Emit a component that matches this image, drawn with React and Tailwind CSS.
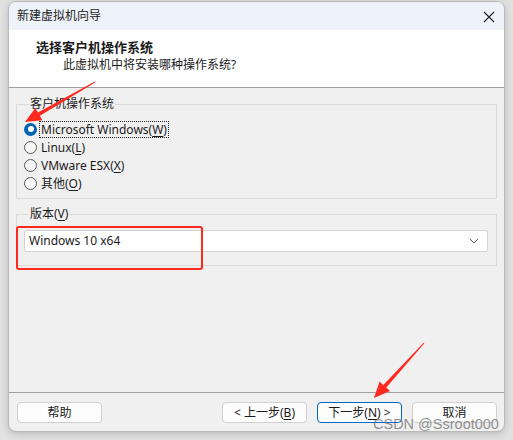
import React from "react";

const U = ({ children }) => <span className="underline underline-offset-2">{children}</span>;

function Radio({ checked, children, focus }) {
  return (
    <div className="flex items-center h-[18px]">
      {checked ? (
        <div className="w-[13px] h-[13px] rounded-full bg-[#0063b1] flex items-center justify-center shrink-0">
          <div className="w-[6px] h-[6px] rounded-full bg-white" />
        </div>
      ) : (
        <div className="w-[13px] h-[13px] rounded-full border border-[#5a5a5a] bg-[#f7f7f7] shrink-0" />
      )}
      <span
        className={
          "ml-[3px] leading-[15px] px-px " +
          (focus ? "outline-1 outline-dotted outline-[#222]" : "")
        }
      >
        {children}
      </span>
    </div>
  );
}

function Btn({ children, primary }) {
  return (
    <div
      className={
        "w-[85px] h-[21px] rounded-[4px] bg-[#fdfdfd] border flex items-center justify-center text-[12px] " +
        (primary ? "border-[#0067c0]" : "border-[#d0d0d0]")
      }
    >
      {children}
    </div>
  );
}

export default function App() {
  return (
    <div
      className="relative w-[513px] h-[440px] bg-[#e2e2e2] pl-2 pt-px text-[12px] text-[#1b1b1b]"
      style={{ fontFamily: '"Segoe UI", "Noto Sans", "Noto Sans CJK SC", sans-serif' }}
    >
      <div className="w-[497px] h-[431px] rounded-[8px] border border-[#b9b9b9] bg-[#f0f0f0] overflow-hidden flex flex-col shadow-[0_2px_8px_rgba(0,0,0,0.18)]">
        {/* title bar */}
        <div className="h-[28px] bg-[#eef2f9] flex items-center justify-between pl-2 pr-[9px] shrink-0">
          <span className="text-[12px]">新建虚拟机向导</span>
          <svg width="12" height="12" viewBox="0 0 12 12" className="mt-px">
            <path d="M1 1 L11 11 M11 1 L1 11" stroke="#222" strokeWidth="1.1" />
          </svg>
        </div>
        {/* header */}
        <div className="h-[58px] bg-white border-b border-[#a0a0a0] shrink-0 pt-[9px]">
          <div className="pl-[27px] font-bold text-[13px] leading-[17px]">选择客户机操作系统</div>
          <div className="pl-[54px] text-[12px] leading-[16px] mt-px">此虚拟机中将安装哪种操作系统?</div>
        </div>
        {/* body */}
        <div className="flex-1 px-[7px] pt-[8px]">
          <fieldset className="border border-[#dadada] pl-[7px] pb-[6px]">
            <legend className="ml-[5px] px-px leading-[16px]">客户机操作系统</legend>
            <div className="pt-[8px] flex flex-col">
              <Radio checked focus>
                Microsoft Windows(<U>W</U>)
              </Radio>
              <Radio>
                Linux(<U>L</U>)
              </Radio>
              <Radio>
                VMware ESX(<U>X</U>)
              </Radio>
              <Radio>
                其他(<U>O</U>)
              </Radio>
            </div>
          </fieldset>
          <fieldset className="mt-[7px] border border-[#dadada] pl-[7px] pr-[8px] pb-[13px]">
            <legend className="ml-[5px] px-px leading-[16px]">
              版本(<U>V</U>)
            </legend>
            <div className="mt-[8px] h-[22px] bg-white border border-[#d4d4d4] rounded-[2px] flex items-center justify-between pl-[4px] pr-[8px]">
              <span>Windows 10 x64</span>
              <svg width="10" height="6" viewBox="0 0 10 6">
                <path d="M1 1 L5 5 L9 1" fill="none" stroke="#555" strokeWidth="1" />
              </svg>
            </div>
          </fieldset>
        </div>
        {/* footer */}
        <div className="h-[39px] border-t border-[#a0a0a0] shrink-0 flex items-start pt-[9px] pl-[8px] pr-[7px]">
          <Btn>帮助</Btn>
          <div className="flex-1" />
          <div className="flex gap-[10px]">
            <Btn>
              &lt; 上一步(<U>B</U>)
            </Btn>
            <Btn primary>
              下一步(<U>N</U>) &gt;
            </Btn>
            <Btn>取消</Btn>
          </div>
        </div>
      </div>

      {/* annotations */}
      <div className="absolute left-[16px] top-[226px] w-[187px] h-[44px] border-2 border-[#ff2a1f] rounded-[3px]" />
      <svg className="absolute left-0 top-0" width="513" height="440" viewBox="0 0 513 440">
        <polygon
          points="95.2,82.4 39.9,115.8 42.4,120.2 25,122 35.4,108 37.9,112.4 94.8,81.6"
          fill="#ff2a1f"
        />
        <polygon
          points="424.4,343.3 386.3,387.5 390,390.9 374,398 379.6,381.5 383.3,384.9 423.6,342.7"
          fill="#ff2a1f"
        />
      </svg>
      <div
        className="absolute left-[373px] top-[415px] text-[14.5px] text-[rgba(110,110,110,0.75)] leading-[18px]"
        style={{ fontFamily: '"Liberation Sans", Arial, sans-serif' }}
      >
        CSDN @Ssroot000
      </div>
    </div>
  );
}
